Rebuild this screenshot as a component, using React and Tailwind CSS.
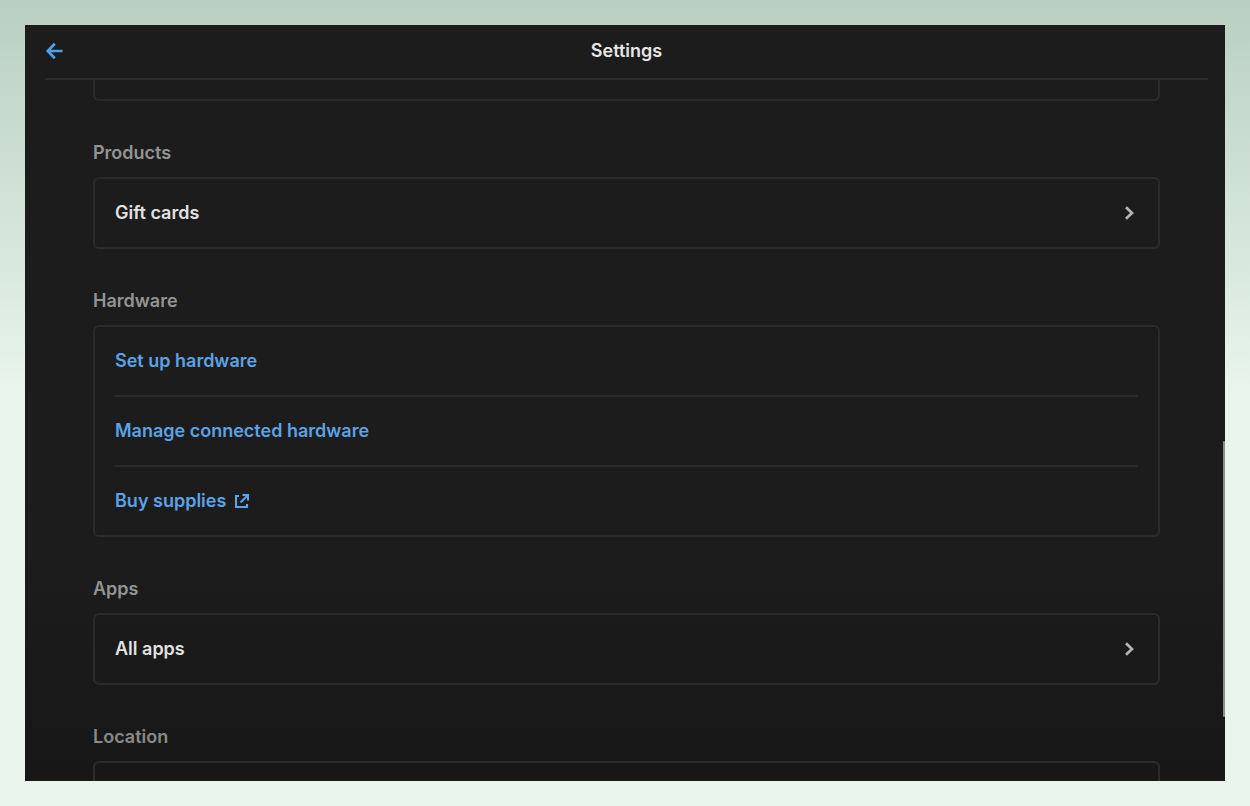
const sections = [
  { title: 'Products', rows: [{ label: 'Gift cards' }] },
  {
    title: 'Hardware',
    rows: [
      { label: 'Set up hardware', link: true },
      { label: 'Manage connected hardware', link: true },
      { label: 'Buy supplies', link: true, external: true },
    ],
  },
  { title: 'Apps', rows: [{ label: 'All apps' }] },
];

function BackIcon() {
  return (
    <svg width="18" height="18" viewBox="0 0 18 18" fill="none" stroke="currentColor" strokeWidth="2.7">
      <path d="M17.5 9H3.5M9.8 1.8 2.8 9l7 7.2" />
    </svg>
  );
}

function ChevronIcon() {
  return (
    <svg width="10" height="16" viewBox="0 0 10 16" fill="none" stroke="currentColor" strokeWidth="2.7">
      <path d="M2 2.2 8 8 2 13.8" />
    </svg>
  );
}

function ExternalIcon() {
  return (
    <svg width="16" height="16" viewBox="0 0 16 16" fill="none" stroke="currentColor" strokeWidth="2.1">
      <path d="M5 3H2v11h11v-3M8.5 2H14v5.5M14 2 6.5 9.5" />
    </svg>
  );
}

function Row({ row }) {
  if (row.link) {
    return (
      <a href="#" className="flex h-[68px] items-center gap-2 text-[#5ba3e6]">
        {row.label}
        {row.external && <ExternalIcon />}
      </a>
    );
  }
  return (
    <button type="button" className="flex h-[68px] w-full items-center justify-between text-[#e2e2e2]">
      {row.label}
      <span className="pr-1 text-[#b4b4b4]"><ChevronIcon /></span>
    </button>
  );
}

export default function App() {
  return (
    <div className="h-screen bg-linear-to-b from-[#b9cfc2] to-[#e8f4ec] to-48% p-[25px] font-['Inter',sans-serif] text-lg font-semibold">
      <div className="relative flex h-full flex-col overflow-hidden bg-linear-to-b from-[#1c1c1c] from-70% to-[#171717]">
        <header className="ml-5 mr-[17px] grid h-[55px] shrink-0 grid-cols-3 items-center border-b-2 border-[#2b2b2b] pb-0.5">
          <button type="button" aria-label="Back" className="justify-self-start text-[#4f9fe8]"><BackIcon /></button>
          <h1 className="text-center text-[#e6e6e6]">Settings</h1>
        </header>

        <main className="min-h-0 flex-1 overflow-hidden pl-[68px] pr-[65px]">
          {/* end of the section above, mostly scrolled away */}
          <div className="h-[21px] rounded-b-md border-2 border-t-0 border-[#2b2b2b]" />

          {sections.map(section => (
            <section key={section.title} className="pt-10">
              <h2 className="mb-3 leading-6 text-[#949494]">{section.title}</h2>
              <ul className="divide-y-2 divide-[#2b2b2b] rounded-md border-2 border-[#2b2b2b] px-5">
                {section.rows.map(row => (
                  <li key={row.label}><Row row={row} /></li>
                ))}
              </ul>
            </section>
          ))}

          <section className="pt-10">
            <h2 className="mb-3 leading-6 text-[#8a8a8a]">Location</h2>
            <div className="h-[72px] rounded-md border-2 border-[#2b2b2b]" />
          </section>
        </main>

        {/* Scroll thumb */}
        <div className="absolute right-0 top-[55%] h-[276px] w-0.5 rounded-full bg-[#8b8b90]" />
      </div>
    </div>
  );
}
